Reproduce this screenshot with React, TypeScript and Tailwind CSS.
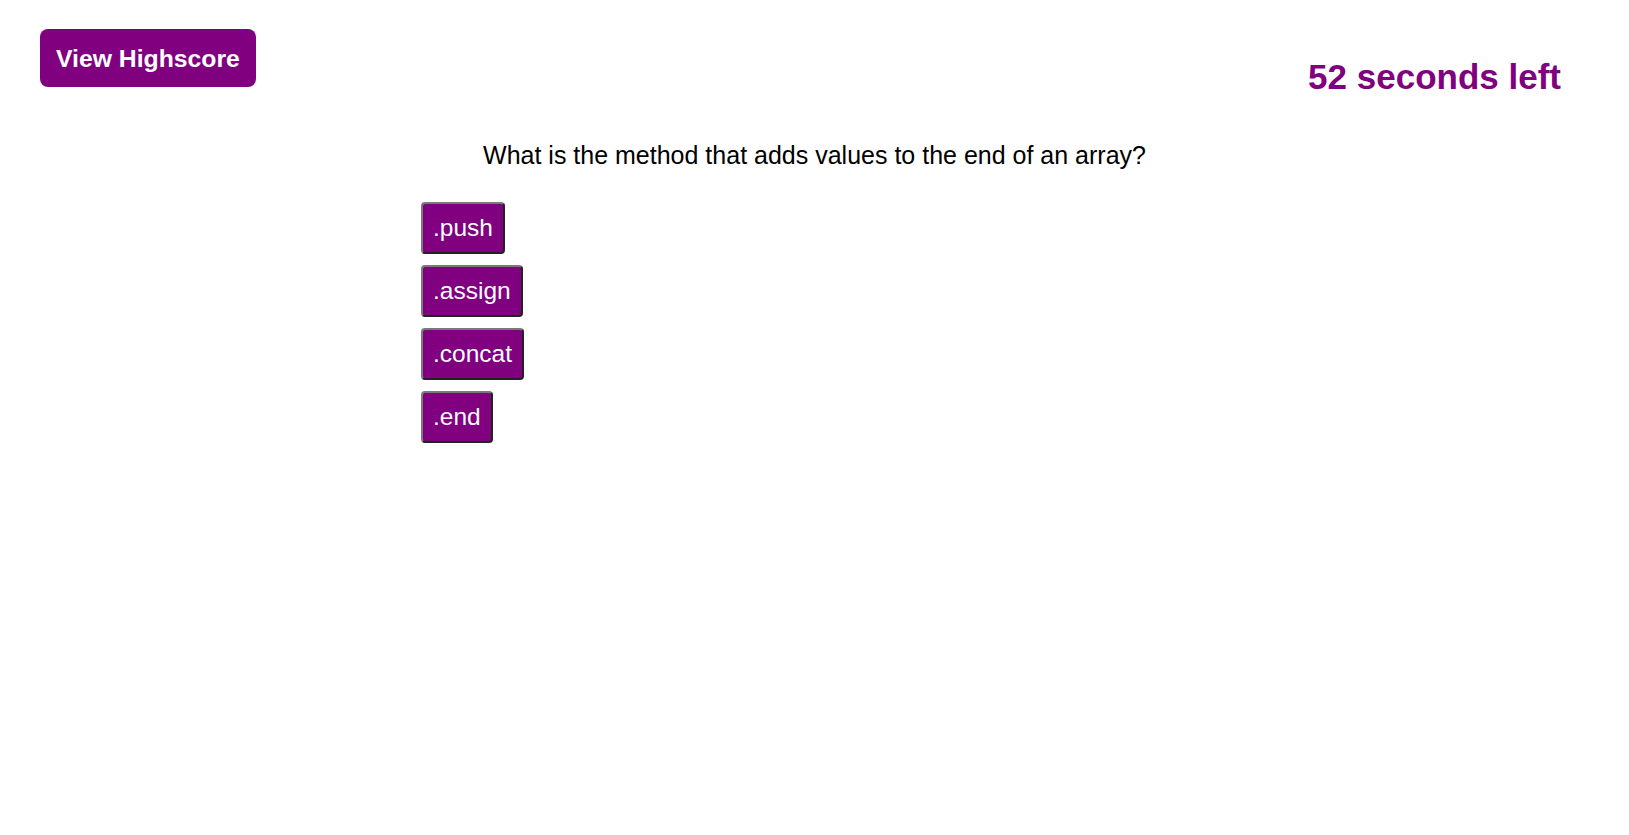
import { useState } from "react";

const answers = [".push", ".assign", ".concat", ".end"];

export default function App() {
  const [secondsLeft] = useState(52);

  return (
    <main className="min-h-screen bg-white font-['Liberation_Sans',Arial,sans-serif] text-black">
      <header className="flex items-start justify-between pl-[40px] pr-[68px]">
        <button className="mt-[29px] rounded-[8px] bg-[#800080] px-[16px] pt-[16px] pb-[14px] text-[24.75px] leading-[28px] font-bold text-white">
          View Highscore
        </button>
        <h2 className="mt-[57px] text-[35px] leading-[40px] font-bold text-[#800080]">
          {secondsLeft} seconds left
        </h2>
      </header>

      <section className="mx-auto mt-[44px] w-[787px]">
        <p className="text-center text-[25px] leading-[29px]">
          What is the method that adds values to the end of an array?
        </p>
        <div className="mt-[32px] flex flex-col items-start gap-[11px]">
          {answers.map((answer) => (
            <button
              key={answer}
              className="rounded-[4px] border-2 border-solid border-t-[#7a7a7a] border-l-[#7a7a7a] border-r-[#222222] border-b-[#222222] bg-[#800080] px-[10px] py-[10px] text-[24.5px] leading-[28px] text-white"
            >
              {answer}
            </button>
          ))}
        </div>
      </section>
    </main>
  );
}
